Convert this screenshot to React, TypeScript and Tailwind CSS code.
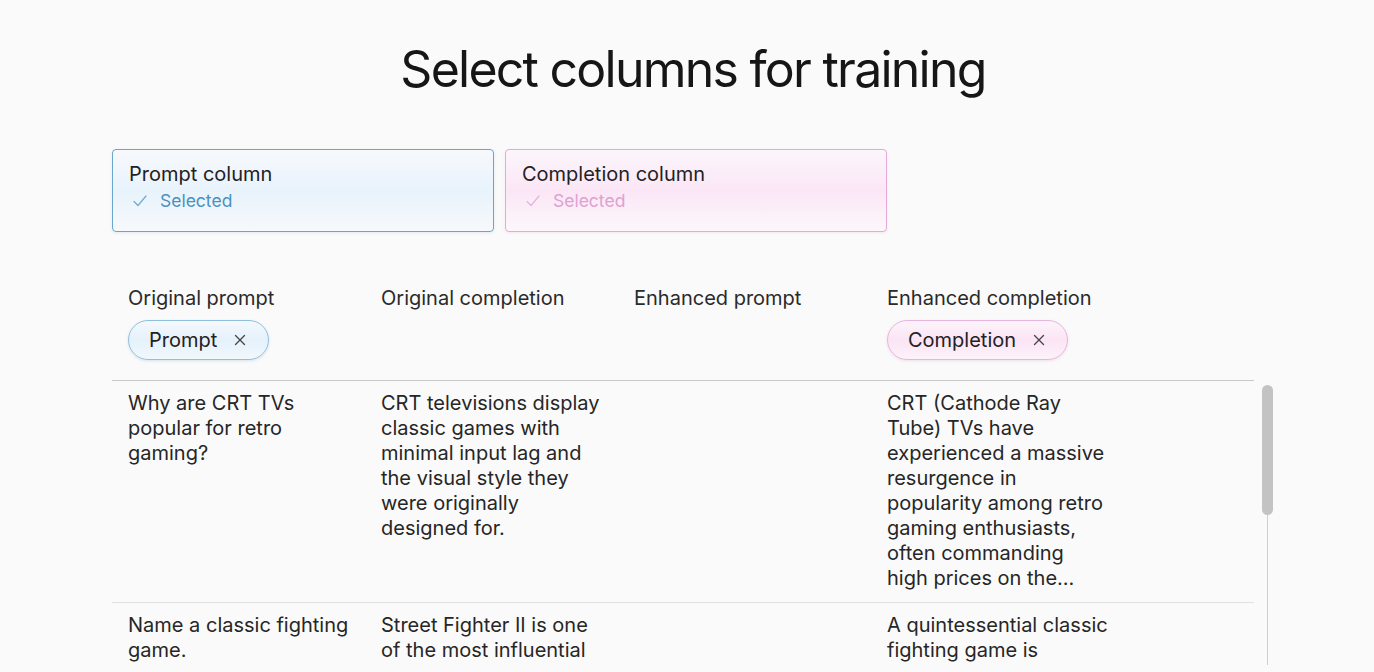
import React from "react";

const font = { fontFamily: "Inter, 'Noto Sans', sans-serif" };

function Check({ color }: { color: string }) {
  return (
    <svg width="16" height="14" viewBox="0 0 16 14" fill="none">
      <path d="M2 7.5 L6 11.5 L14 2" stroke={color} strokeWidth="1.2" strokeLinecap="round" strokeLinejoin="round" />
    </svg>
  );
}

function X() {
  return (
    <svg width="12" height="12" viewBox="0 0 12 12" fill="none">
      <path d="M1.5 1.5 L10.5 10.5 M10.5 1.5 L1.5 10.5" stroke="#444" strokeWidth="1.3" strokeLinecap="round" />
    </svg>
  );
}

const rows: string[][][] = [
  [
    ["Why are CRT TVs", "popular for retro", "gaming?"],
    ["CRT televisions display", "classic games with", "minimal input lag and", "the visual style they", "were originally", "designed for."],
    [],
    [
      "CRT (Cathode Ray",
      "Tube) TVs have",
      "experienced a massive",
      "resurgence in",
      "popularity among retro",
      "gaming enthusiasts,",
      "often commanding",
      "high prices on the...",
    ],
  ],
  [
    ["Name a classic fighting", "game."],
    ["Street Fighter II is one", "of the most influential", "fighting games ever", "made."],
    [],
    ["A quintessential classic", "fighting game is", "Street Fighter II,", "released by Capcom."],
  ],
];

function Cell({ lines }: { lines: string[] }) {
  return (
    <div className="pl-4">
      {lines.map((l, i) => (
        <div key={i} className="whitespace-nowrap">
          {l}
        </div>
      ))}
    </div>
  );
}

export default function App() {
  return (
    <div className="h-[672px] w-full overflow-hidden bg-[#fafafa] text-[#1c1c1c]" style={font}>
      <div className="ml-[112px] w-[1162px]">
        <h1 className="pt-[38px] text-center text-[50px] leading-[62px] font-normal tracking-[-0.035em] text-[#161616]">
          Select columns for training
        </h1>

        <div className="mt-[49px] flex gap-[11px]">
          <div className="h-[83px] w-[382px] rounded-[4px] border border-[#6aa6cc] bg-gradient-to-b from-[#f7f9fc] via-[#e8f3fc] to-[#f7f9fb] px-4 pt-[10px] shadow-[0_1px_3px_rgba(80,140,190,0.15)]">
            <div className="text-[20px] leading-[28px] text-[#222]">Prompt column</div>
            <div className="mt-[1px] flex items-center gap-[12px] pl-[3px] text-[17.5px] leading-[24px] text-[#4b90c0]">
              <Check color="#6fa8cf" />
              <span>Selected</span>
            </div>
          </div>
          <div className="h-[83px] w-[382px] rounded-[4px] border border-[#e6a9d8] bg-gradient-to-b from-[#fcf6fb] via-[#fbe6f6] to-[#fcf7fb] px-4 pt-[10px] shadow-[0_1px_3px_rgba(200,120,180,0.15)]">
            <div className="text-[20px] leading-[28px] text-[#222]">Completion column</div>
            <div className="mt-[1px] flex items-center gap-[12px] pl-[3px] text-[17.5px] leading-[24px] text-[#dda2d2]">
              <Check color="#e6b3dc" />
              <span>Selected</span>
            </div>
          </div>
        </div>

        <div className="mt-[52px]">
          <div className="grid w-[1142px] grid-cols-[253px_253px_253px_253px_1fr] border-b border-[#c9c9c9] pb-[20px]">
            <div className="px-4">
              <div className="text-[20px] leading-[28px] text-[#2a2a2a]">Original prompt</div>
              <div className="mt-[8px] inline-flex h-[40px] items-center gap-[17px] rounded-full border border-[#8fbfdd] bg-gradient-to-b from-[#f4f9fd] via-[#e5f1fb] to-[#f2f8fc] pl-[20px] pr-[22px] shadow-[0_1px_3px_rgba(80,140,190,0.2)]">
                <span className="text-[20px] leading-[28px] text-[#222]">Prompt</span>
                <X />
              </div>
            </div>
            <div className="px-4 text-[20px] leading-[28px] text-[#2a2a2a]">Original completion</div>
            <div className="px-4 text-[20px] leading-[28px] text-[#2a2a2a]">Enhanced prompt</div>
            <div className="px-4">
              <div className="text-[20px] leading-[28px] text-[#2a2a2a]">Enhanced completion</div>
              <div className="mt-[8px] inline-flex h-[40px] items-center gap-[17px] rounded-full border border-[#e9b4dd] bg-gradient-to-b from-[#fcf4fb] via-[#fbe4f5] to-[#fcf3fa] pl-[20px] pr-[22px] shadow-[0_1px_3px_rgba(200,120,180,0.2)]">
                <span className="text-[20px] leading-[28px] text-[#222]">Completion</span>
                <X />
              </div>
            </div>
            <div />
          </div>

          <div className="flex h-[284px] gap-[8px] overflow-hidden">
            <div className="w-[1142px]">
              {rows.map((r, i) => (
                <div
                  key={i}
                  className={`grid grid-cols-[253px_253px_253px_253px_1fr] pt-[10px] pb-[11px] text-[20px] leading-[25px] text-[#262626] ${i === 0 ? "border-b border-[#e2e2e2]" : ""}`}
                >
                  {r.map((lines, j) => (
                    <Cell key={j} lines={lines} />
                  ))}
                  <div />
                </div>
              ))}
            </div>
            <div className="flex w-[11px] flex-col items-center pt-[4px]">
              <div className="h-[130px] w-[11px] shrink-0 rounded-full bg-[#c3c3c3]" />
              <div className="h-[300px] w-px shrink-0 bg-[#cfcfcf]" />
            </div>
          </div>
        </div>
      </div>
    </div>
  );
}
